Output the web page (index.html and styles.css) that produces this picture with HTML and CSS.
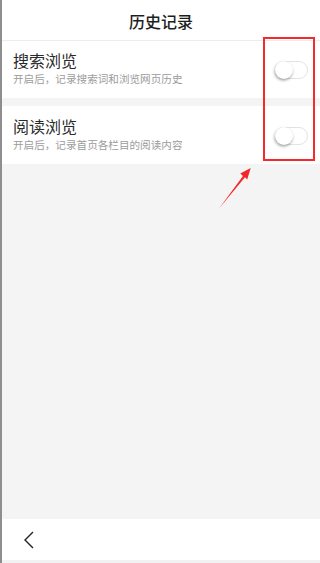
FILE: index.html
```html
<!DOCTYPE html>
<html lang="zh">
<head>
<meta charset="utf-8">
<title>历史记录</title>
<link rel="stylesheet" href="styles.css">
</head>
<body>
<div class="page">
  <header class="topbar"><h1 class="title">历史记录</h1></header>
  <section class="row">
    <div class="text">
      <div class="row-title">搜索浏览</div>
      <div class="row-sub">开启后，记录搜索词和浏览网页历史</div>
    </div>
    <span class="toggle"><span class="knob"></span></span>
  </section>
  <div class="gap"></div>
  <section class="row row2">
    <div class="text">
      <div class="row-title">阅读浏览</div>
      <div class="row-sub">开启后，记录首页各栏目的阅读内容</div>
    </div>
    <span class="toggle"><span class="knob"></span></span>
  </section>
  <div class="filler"></div>
  <footer class="bottombar">
    <svg class="back" width="12" height="18" viewBox="0 0 12 18"><path d="M10 1 L2 9 L10 17" fill="none" stroke="#222" stroke-width="1.4"/></svg>
  </footer>
  <div class="strip"></div>

  <div class="mark-box"></div>
  <svg class="mark-arrow" width="320" height="563" viewBox="0 0 320 563">
    <polygon points="219,208.5 243,176 240.3,173.5 250.7,168 247.2,179.5 245,177.2" fill="#f5262a"/>
  </svg>
</div>
</body>
</html>
```

FILE: styles.css
```css
* { box-sizing: border-box; margin: 0; padding: 0; }
html, body { width: 320px; height: 563px; overflow: hidden; }
body { font-family: "Noto Sans CJK SC", "Noto Sans", sans-serif; background: #f4f4f4; }
.page {
  position: relative;
  width: 320px;
  height: 563px;
  display: flex;
  flex-direction: column;
  background: #f4f4f4;
  border-left: 2px solid #8e8e8e;
}
.topbar {
  height: 41px;
  background: #fff;
  border-bottom: 1px solid #ececec;
  display: flex;
  align-items: center;
  justify-content: center;
}
.title { font-size: 16px; font-weight: 500; color: #1e1e1e; line-height: 20px; margin-top: 1px; }
.row {
  height: 57px;
  background: #fff;
  display: flex;
  align-items: center;
  justify-content: space-between;
  padding: 0 12px 0 11px;
}
.row2 { height: 58px; }
.text { display: flex; flex-direction: column; align-self: flex-start; padding-top: 9px; }
.row2 .text { padding-top: 10px; }
.row-title { font-size: 16px; line-height: 21px; color: #2a2a2a; }
.row-sub { font-size: 10.6px; line-height: 16px; color: #9c9c9c; letter-spacing: 0; }
.toggle {
  position: relative;
  width: 33px;
  height: 18px;
  border: 1px solid #e3e3e3;
  border-radius: 9px;
  background: #fff;
  margin-top: 1px;
}
.knob {
  position: absolute;
  left: -1px;
  top: -1px;
  width: 18px;
  height: 18px;
  border-radius: 50%;
  background: #fff;
  box-shadow: -0.5px 1.5px 3px rgba(0,0,0,0.38);
}
.gap { height: 8px; }
.filler { flex: 1; }
.bottombar {
  height: 41px;
  background: #fff;
  display: flex;
  align-items: center;
  padding-left: 21px;
}
.back { display: block; }
.strip { height: 3px; background: #f2f2f2; }
.mark-box {
  position: absolute;
  left: 261px;
  top: 37px;
  width: 52px;
  height: 124px;
  border: 2px solid #f52a2a;
}
.mark-arrow { position: absolute; left: -2px; top: 0; pointer-events: none; }
```
